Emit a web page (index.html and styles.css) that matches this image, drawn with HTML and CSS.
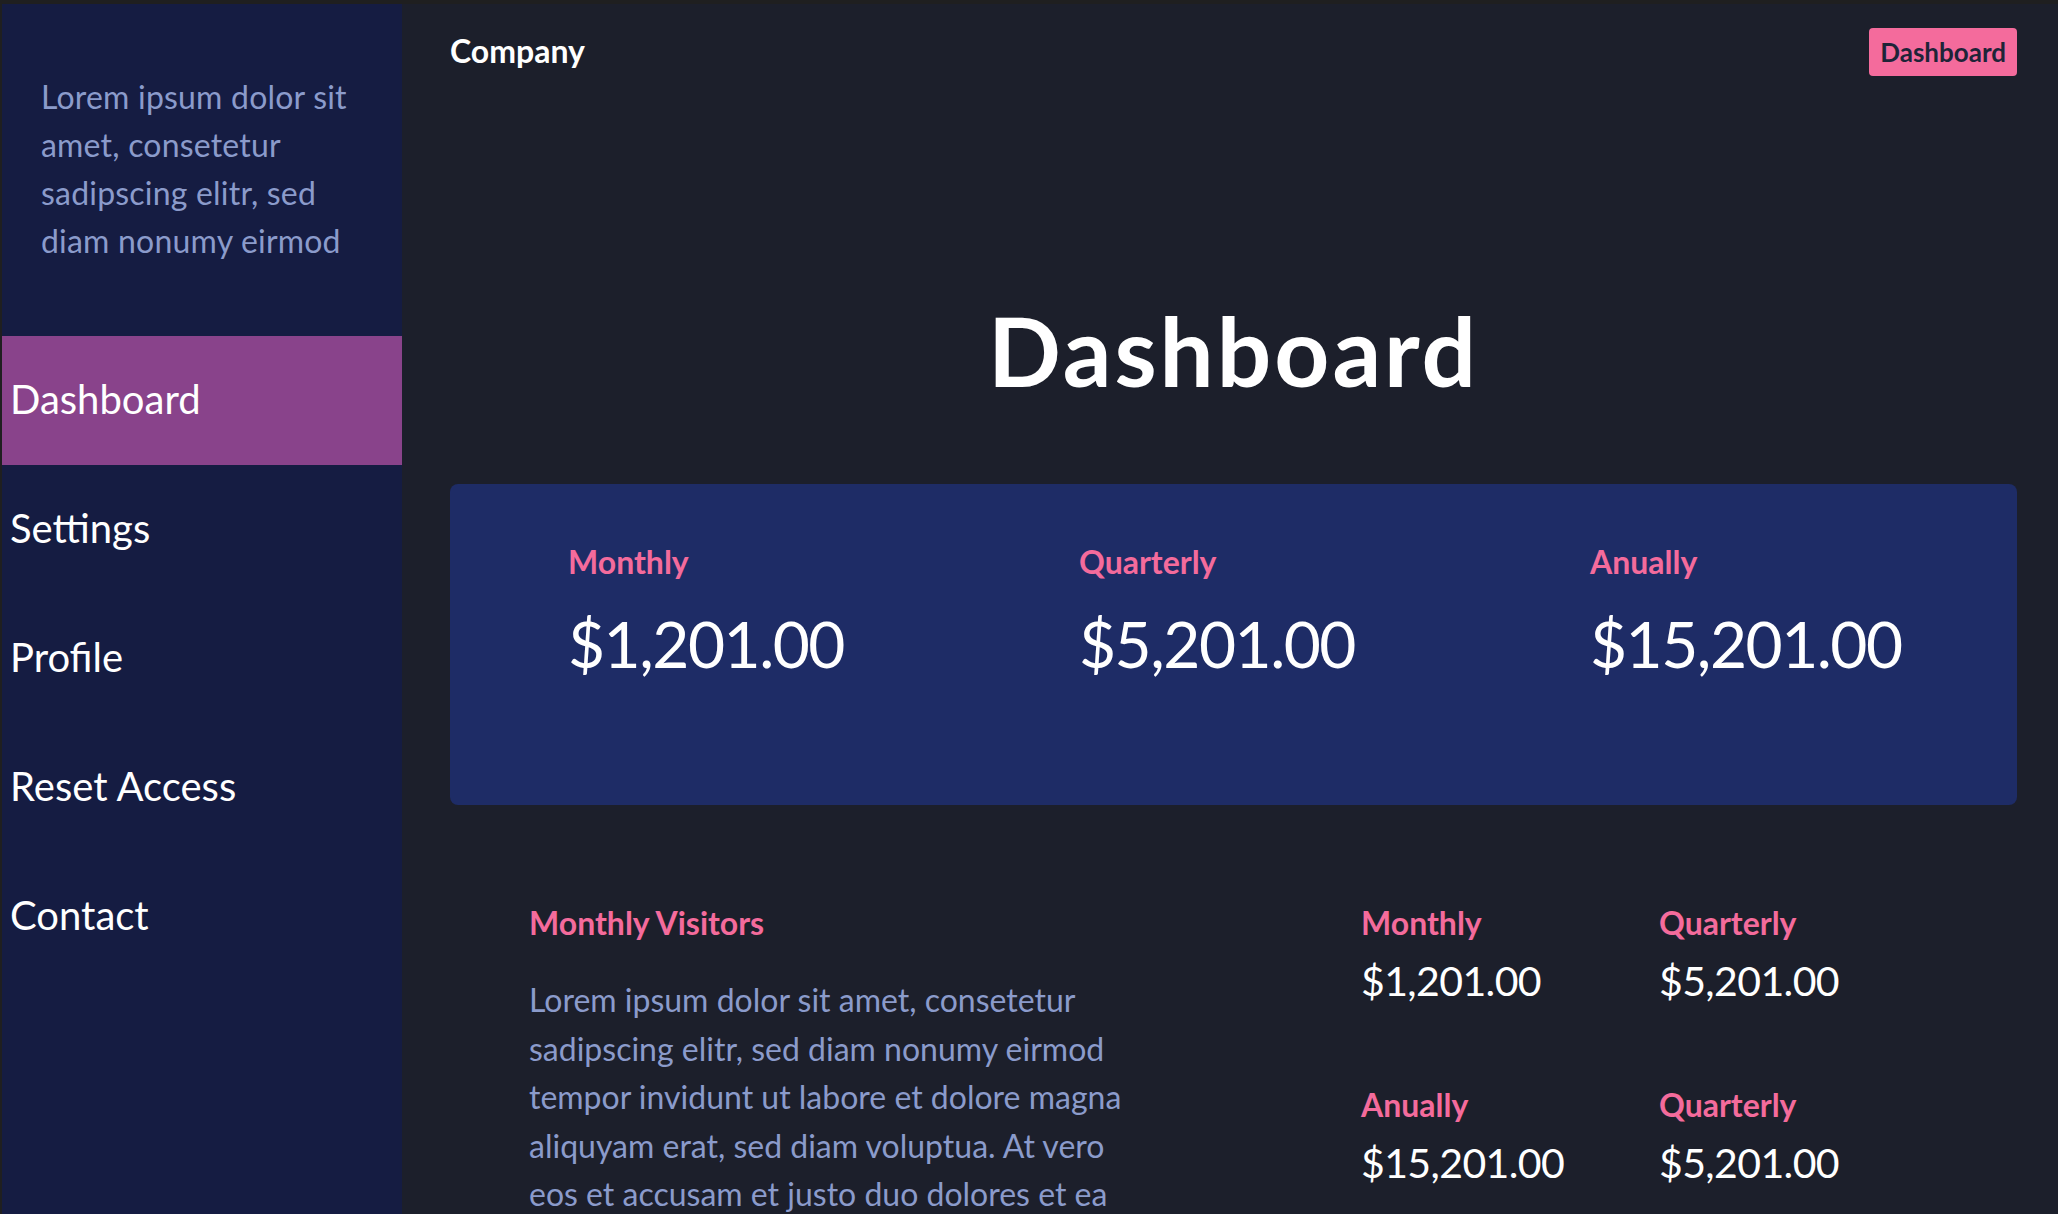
FILE: index.html
```html
<!DOCTYPE html>
<html lang="en">
<head>
<meta charset="utf-8">
<title>Dashboard</title>
<link rel="stylesheet" href="styles.css">
</head>
<body>
<div class="app">
  <aside class="sidebar">
    <p class="sidebar-intro">Lorem ipsum dolor sit amet, consetetur sadipscing elitr, sed diam nonumy eirmod</p>
    <nav class="nav">
      <a class="nav-item active" href="#">Dashboard</a>
      <a class="nav-item" href="#">Settings</a>
      <a class="nav-item" href="#">Profile</a>
      <a class="nav-item" href="#">Reset Access</a>
      <a class="nav-item" href="#">Contact</a>
    </nav>
  </aside>
  <main class="main">
    <header class="topbar">
      <span class="brand">Company</span>
      <span class="badge">Dashboard</span>
    </header>
    <h1 class="title">Dashboard</h1>
    <section class="card">
      <div class="stat">
        <div class="stat-label">Monthly</div>
        <div class="stat-value">$1,201.00</div>
      </div>
      <div class="stat">
        <div class="stat-label">Quarterly</div>
        <div class="stat-value">$5,201.00</div>
      </div>
      <div class="stat">
        <div class="stat-label">Anually</div>
        <div class="stat-value">$15,201.00</div>
      </div>
    </section>
    <section class="lower">
      <div class="visitors">
        <div class="stat-label">Monthly Visitors</div>
        <p class="visitors-text">Lorem ipsum dolor sit amet, consetetur sadipscing elitr, sed diam nonumy eirmod tempor invidunt ut labore et dolore magna aliquyam erat, sed diam voluptua. At vero eos et accusam et justo duo dolores et ea rebum. Stet clita kasd gubergren, no sea takimata sanctus est.</p>
      </div>
      <div class="mini-grid">
        <div class="mini">
          <div class="stat-label">Monthly</div>
          <div class="mini-value">$1,201.00</div>
        </div>
        <div class="mini">
          <div class="stat-label">Quarterly</div>
          <div class="mini-value">$5,201.00</div>
        </div>
        <div class="mini">
          <div class="stat-label">Anually</div>
          <div class="mini-value">$15,201.00</div>
        </div>
        <div class="mini">
          <div class="stat-label">Quarterly</div>
          <div class="mini-value">$5,201.00</div>
        </div>
      </div>
    </section>
  </main>
</div>
</body>
</html>
```

FILE: styles.css
```css
* { box-sizing: border-box; }

html, body {
  height: 100%;
}

body {
  margin: 0;
  padding: 4px 0 0 2px;
  background: #1f1f20;
  font-family: Lato, "Noto Sans", sans-serif;
  overflow: hidden;
}

.app {
  display: flex;
  height: 100%;
}

.sidebar {
  width: 400px;
  flex: 0 0 400px;
  background: #151c42;
  min-height: 1214px;
}

.sidebar-intro {
  margin: 0;
  padding: 69px 39px 0 39px;
  color: #8b9bcb;
  font-size: 32px;
  line-height: 48px;
  letter-spacing: 0.2px;
}

.nav {
  display: flex;
  flex-direction: column;
  margin-top: 71px;
}

.nav-item {
  display: flex;
  align-items: center;
  height: 129px;
  padding: 0 0 4px 8px;
  color: #ffffff;
  font-size: 40px;
  text-decoration: none;
}

.nav-item.active {
  background: #89438b;
}

.main {
  flex: 1;
  background: #1c1f2b;
  padding: 0 41px 0 48px;
  min-width: 0;
}

.topbar {
  display: flex;
  justify-content: space-between;
  align-items: center;
  padding-top: 24px;
}

.brand {
  color: #ffffff;
  font-weight: 700;
  font-size: 32px;
  padding-bottom: 3px;
}

.badge {
  display: inline-flex;
  align-items: center;
  height: 48px;
  padding: 0 11px;
  background: #f46b9c;
  color: #1e2438;
  font-weight: 700;
  font-size: 26px;
  border-radius: 4px;
}

.title {
  margin: 216px 0 0;
  text-align: center;
  color: #ffffff;
  font-size: 96px;
  line-height: 115px;
  font-weight: 700;
  letter-spacing: 3px;
}

.card {
  margin-top: 77px;
  height: 321px;
  background: #1e2c66;
  border-radius: 8px;
  padding: 55px 0 0 118px;
  display: grid;
  grid-template-columns: 511px 511px 1fr;
  align-items: start;
}

.stat-label {
  color: #f46b9c;
  font-weight: 700;
  font-size: 32px;
  line-height: 45px;
}

.stat-value {
  margin-top: 21px;
  color: #ffffff;
  font-size: 64px;
  line-height: 77px;
  letter-spacing: -1.5px;
}

.lower {
  display: flex;
  justify-content: space-between;
  align-items: flex-start;
  padding: 95px 60px 0 79px;
}

.visitors {
  width: 612px;
}

.visitors-text {
  margin: 31px 0 0;
  color: #8b9bcb;
  font-size: 32px;
  line-height: 48.5px;
}

.mini-grid {
  display: grid;
  grid-template-columns: 298px 298px;
  row-gap: 73px;
}

.mini-value {
  margin-top: 8px;
  color: #ffffff;
  font-size: 41px;
  line-height: 56px;
  letter-spacing: -0.6px;
}
```
